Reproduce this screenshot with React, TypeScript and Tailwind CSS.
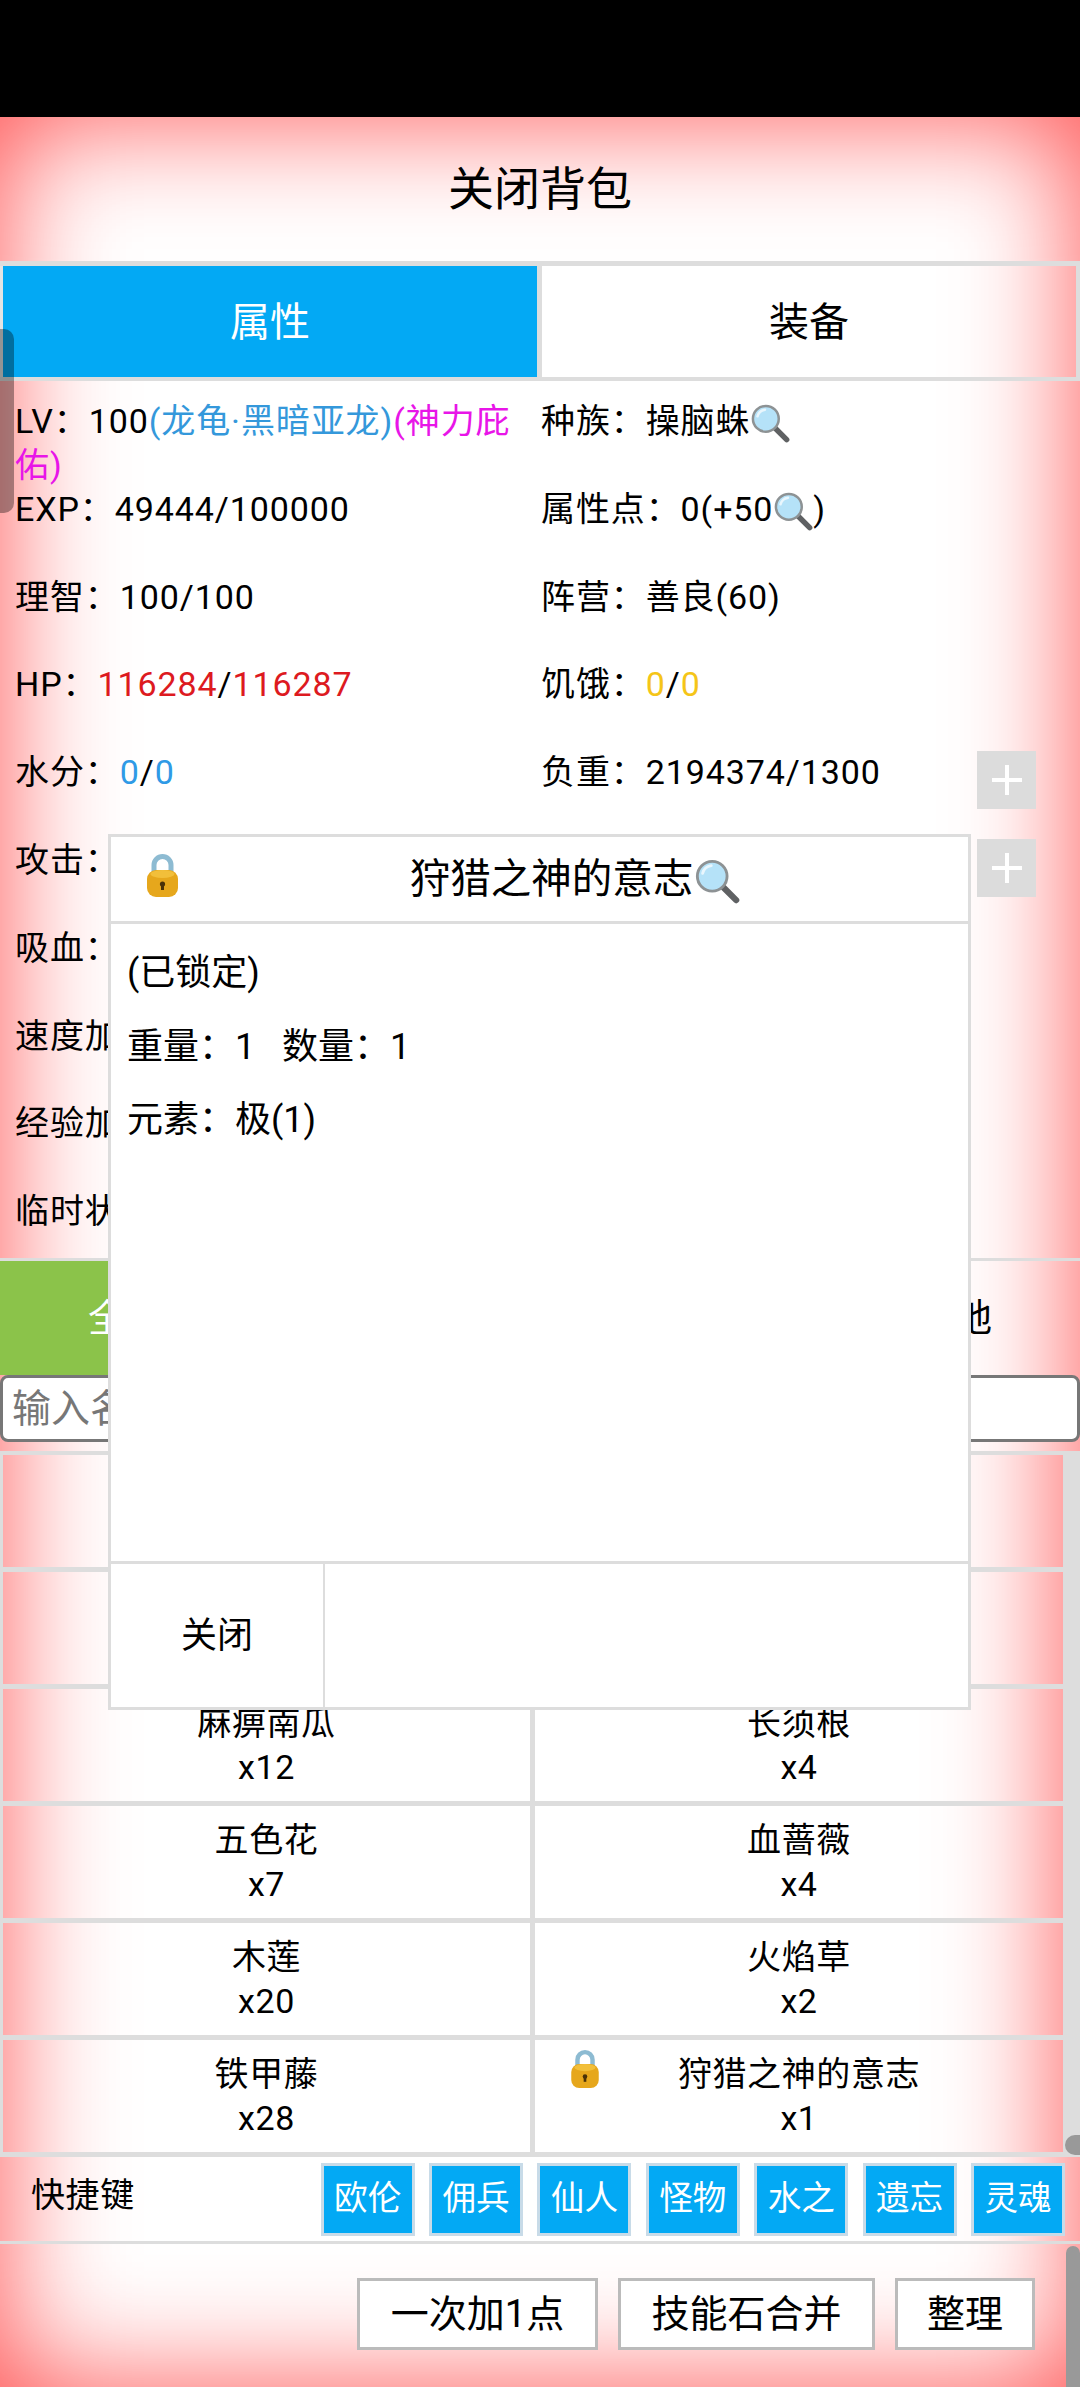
import React from 'react'

const FONT = "[font-family:Roboto,'Noto_Sans_CJK_SC',sans-serif]"

function Magnifier({ className }: { className: string }) {
  return (
    <svg viewBox="0 0 48 48" className={className}>
      <line x1="30" y1="30" x2="44" y2="44" stroke="#5f6163" strokeWidth="6.5" strokeLinecap="round" />
      <circle cx="19" cy="19" r="15.5" fill="#b5e2f8" stroke="#8d9294" strokeWidth="3" />
      <path d="M9 16a11 11 0 0 1 9-8" fill="none" stroke="#ffffff" strokeWidth="3" strokeLinecap="round" opacity="0.7" />
    </svg>
  )
}

function Lock({ className }: { className: string }) {
  return (
    <svg viewBox="0 0 31 44" className={className}>
      <path d="M7 22V12a8.5 8.5 0 0 1 17 0V22" fill="none" stroke="#8dbbd2" strokeWidth="5" />
      <rect x="0" y="17" width="31" height="27" rx="9" fill="#e6a71c" />
      <ellipse cx="15.5" cy="21" rx="12" ry="4" fill="#f2bf3a" />
      <circle cx="15.5" cy="31" r="2.6" fill="#4a3208" />
      <rect x="14" y="31" width="3" height="6" fill="#4a3208" />
    </svg>
  )
}

function Plus() {
  return (
    <div className="flex h-[58px] w-[59px] shrink-0 items-center justify-center bg-[#dcdcdc]">
      <svg viewBox="0 0 32 32" className="h-8 w-8">
        <path d="M16 1v30M1 16h30" stroke="#ffffff" strokeWidth="4" />
      </svg>
    </div>
  )
}

const items = [
  ['', '', '', ''],
  ['', '', '', ''],
  ['麻痹南瓜', 'x12', '长须根', 'x4'],
  ['五色花', 'x7', '血蔷薇', 'x4'],
  ['木莲', 'x20', '火焰草', 'x2'],
  ['铁甲藤', 'x28', '狩猎之神的意志', 'x1'],
]

const shortcuts = ['欧伦', '佣兵', '仙人', '怪物', '水之', '遗忘', '灵魂']
const glow = 'shadow-[inset_0_0_120px_#ff4d4d]'

export default function App() {
  return (
    <div className={`h-[2387px] w-[1080px] overflow-hidden bg-black text-[34px] leading-[44px] tracking-[0.6px] text-black ${FONT}`}>
      <div className="h-[117px]" />
      <div className={`relative flex h-[2270px] flex-col bg-white ${glow}`}>
        {/* Title */}
        <div className="flex h-[144px] items-center justify-center text-[46px] tracking-normal">关闭背包</div>

        {/* Top tabs */}
        <div className="flex h-[120px] border-y-[4px] border-t-[5px] border-[#dddddd] text-[40px] tracking-normal">
          <div className="flex w-[537px] items-center justify-center border-l-[3px] border-[#e4e4e4] bg-[#03a9f4] pt-[2px] text-white">属性</div>
          <div className="flex flex-1 items-center justify-center border-x-[5px] border-r-[4px] border-[#dddddd] pt-[2px]">装备</div>
        </div>

        {/* Stats */}
        <div className="grid h-[877px] grid-cols-[526px_1fr] auto-rows-[87.8px] overflow-hidden pl-[15px] pr-[44px] pt-[18px] tracking-[0.9px]">
          <div>
            LV：100<span className="text-[#3498db]">(龙龟·黑暗亚龙)</span>
            <span className="text-[#e815e8]">(神力庇佑)</span>
          </div>
          <div className="flex items-start">种族：操脑蛛<Magnifier className="mt-[4px] h-[40px] w-[40px]" /></div>
          <div>EXP：49444/100000</div>
          <div className="flex items-start">属性点：0(+50<Magnifier className="mt-[4px] h-[40px] w-[40px]" />)</div>
          <div>理智：100/100</div>
          <div>阵营：善良(60)</div>
          <div>HP：<span className="text-[#dd1a1f]">116284</span>/<span className="text-[#dd1a1f]">116287</span></div>
          <div>饥饿：<span className="text-[#f5c518]">0</span>/<span className="text-[#f5c518]">0</span></div>
          <div>水分：<span className="text-[#2f9ae6]">0</span>/<span className="text-[#2f9ae6]">0</span></div>
          <div className="flex items-start justify-between">
            <span>负重：2194374/1300</span>
            <div className="mt-px"><Plus /></div>
          </div>
          <div>攻击：</div>
          <div className="flex justify-end"><div className="mt-px"><Plus /></div></div>
          <div>吸血：</div>
          <div />
          <div>速度加成：</div>
          <div />
          <div>经验加成：</div>
          <div />
          <div>临时状态：</div>
          <div />
        </div>

        {/* Filter tabs */}
        <div className="flex h-[117px] border-t-[3px] border-[#dddddd] text-[38px] tracking-normal">
          <div className="flex w-[252px] items-center justify-center bg-[#8bc34a] text-white">全部</div>
          <div className="flex flex-1 items-center justify-end pr-[88px]">基地</div>
        </div>

        {/* Search */}
        <input
          placeholder="输入名称"
          className="h-[67px] w-full rounded-[8px] border-[3px] border-[#777777] bg-white px-[9px] text-[39px] tracking-normal outline-none placeholder:text-[#777777]"
        />

        {/* Item list */}
        <div className="mt-[9px] flex h-[706px] overflow-hidden border-t-[4px] border-[#dddddd]">
          <div className="w-[1063px] overflow-hidden">
            <div className={`-my-[200px] bg-white py-[200px] ${glow}`}>
              {items.map((row, i) => (
                <div key={i} className="flex h-[117px] border-b-[5px] border-l-[3px] border-[#dddddd] leading-[44px]">
                  <div className="flex w-[532px] flex-col items-center justify-center border-r-[5px] border-[#dddddd]">
                    <div>{row[0]}</div>
                    <div>{row[1]}</div>
                  </div>
                  <div className="relative flex flex-1 flex-col items-center justify-center">
                    {i === 5 && <Lock className="absolute left-[33px] top-[9px] h-[39px] w-[34px]" />}
                    <div>{row[2]}</div>
                    <div>{row[3]}</div>
                  </div>
                </div>
              ))}
            </div>
          </div>
          <div className="relative flex-1 bg-[#dddddd]">
            <div className="absolute bottom-[2px] right-0 h-[20px] w-[15px] rounded-l-full bg-[#999999]" />
          </div>
        </div>

        {/* Shortcuts */}
        <div className="flex h-[87px] items-center justify-between border-b-[3px] border-[#dddddd] pl-[31px] pr-[15px]">
          <span className="-mt-[8px]">快捷键</span>
          <div className="flex gap-[14.4px]">
            {shortcuts.map((s) => (
              <div key={s} className="flex h-[73px] w-[94px] items-center justify-center border-[3px] border-[#c8dbe8] bg-[#03a9f4] text-[33.6px] tracking-normal text-white">
                {s}
              </div>
            ))}
          </div>
        </div>

        {/* Bottom actions */}
        <div className="flex justify-end gap-[20px] pr-[45px] pt-[34px] text-[38px] tracking-normal">
          <div className="flex h-[72px] w-[241px] items-center justify-center border-[3px] border-[#bbbbbb] bg-white">一次加1点</div>
          <div className="flex h-[72px] w-[257px] items-center justify-center border-[3px] border-[#bbbbbb] bg-white">技能石合并</div>
          <div className="flex h-[72px] w-[140px] items-center justify-center border-[3px] border-[#bbbbbb] bg-white">整理</div>
        </div>

        {/* Scroll thumbs */}
        <div className="absolute left-0 top-[212px] h-[184px] w-[14px] rounded-r-[10px] bg-black/35" />
        <div className="absolute bottom-0 right-0 h-[141px] w-[14px] rounded-t-full bg-[#999999]" />

        {/* Item dialog */}
        <div className="absolute left-[108px] top-[717px] flex h-[876px] w-[863px] flex-col border-[3px] border-[#dddddd] bg-white text-[36px] tracking-normal">
          <div className="relative flex h-[87px] shrink-0 items-center justify-center border-b-[3px] border-[#dddddd] pl-[72px] text-[40.5px]">
            <Lock className="absolute left-[36px] top-[16px] h-[44px] w-[31px]" />
            狩猎之神的意志<Magnifier className="mt-[4px] h-[46px] w-[48px]" />
          </div>
          <div className="flex-1 px-[16px] pt-[13px] leading-[73.5px]">
            <div>(已锁定)</div>
            <div>重量：1&nbsp;&nbsp;&nbsp;数量：1</div>
            <div>元素：极(1)</div>
          </div>
          <div className="flex h-[146px] shrink-0 border-t-[3px] border-[#dddddd]">
            <div className="flex w-[214px] items-center justify-center border-r-[2px] border-[#dddddd]">关闭</div>
          </div>
        </div>
      </div>
    </div>
  )
}
